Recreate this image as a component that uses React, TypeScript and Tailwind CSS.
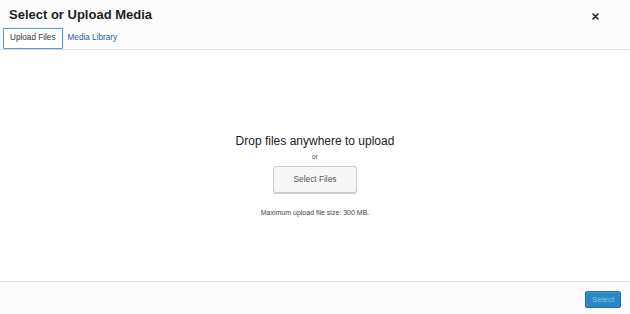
export default function App() {
  return (
    <div
      className="w-[630px] h-[314px] flex flex-col bg-white overflow-hidden"
      style={{ fontFamily: '"Liberation Sans", Arial, sans-serif' }}
    >
      <div className="h-[50px] bg-[#fcfcfc] border-b border-[#e2e2e2] flex flex-col">
        <div className="flex items-start justify-between pt-[7px] h-[28px]">
          <h1 className="pl-[9px] text-[13px] leading-[16px] font-bold text-[#1e1e1e]">
            Select or Upload Media
          </h1>
          <button className="mr-[31px] mt-[6px] w-[7px] h-[7px] flex items-center justify-center">
            <svg width="7" height="7" viewBox="0 0 7 7">
              <path d="M1 1 L6 6 M6 1 L1 6" stroke="#222" strokeWidth="1.6" strokeLinecap="round" />
            </svg>
          </button>
        </div>
        <div className="flex items-stretch h-[21px]">
          <div className="ml-[3px] px-[6px] border border-[#5b9dd9] bg-white rounded-[1px] flex items-center text-[8.2px] text-[#333] shadow-[0_0_1px_rgba(30,140,190,0.6)]">
            Upload Files
          </div>
          <div className="px-[5px] flex items-center text-[8.2px] text-[#2a5d8f]">
            Media Library
          </div>
        </div>
      </div>

      <div className="flex-1 flex flex-col items-center pt-[84px] bg-white">
        <div className="text-[12px] leading-[14px] text-[#222]">Drop files anywhere to upload</div>
        <div className="mt-[5px] text-[6.5px] leading-[8px] text-[#444]">or</div>
        <button className="mt-[5px] w-[84px] h-[27px] bg-[#f7f7f7] border border-[#cccccc] rounded-[3px] shadow-[0_1px_0_#cccccc] text-[8.3px] text-[#555] flex items-center justify-center">
          Select Files
        </button>
        <div className="mt-[15px] text-[7px] leading-[9px] text-[#444]">
          Maximum upload file size: 300 MB.
        </div>
      </div>

      <div className="h-[33px] bg-[#fcfcfc] border-t border-[#e2e2e2] flex items-start justify-end pr-[9px] pt-[9px]">
        <button className="w-[36px] h-[17px] bg-[#2b87c5] border border-[#1f70aa] rounded-[2px] text-[8px] text-[#8cc0e3] flex items-center justify-center shadow-[inset_0_1px_0_rgba(120,200,230,0.3)]">
          Select
        </button>
      </div>
    </div>
  );
}
